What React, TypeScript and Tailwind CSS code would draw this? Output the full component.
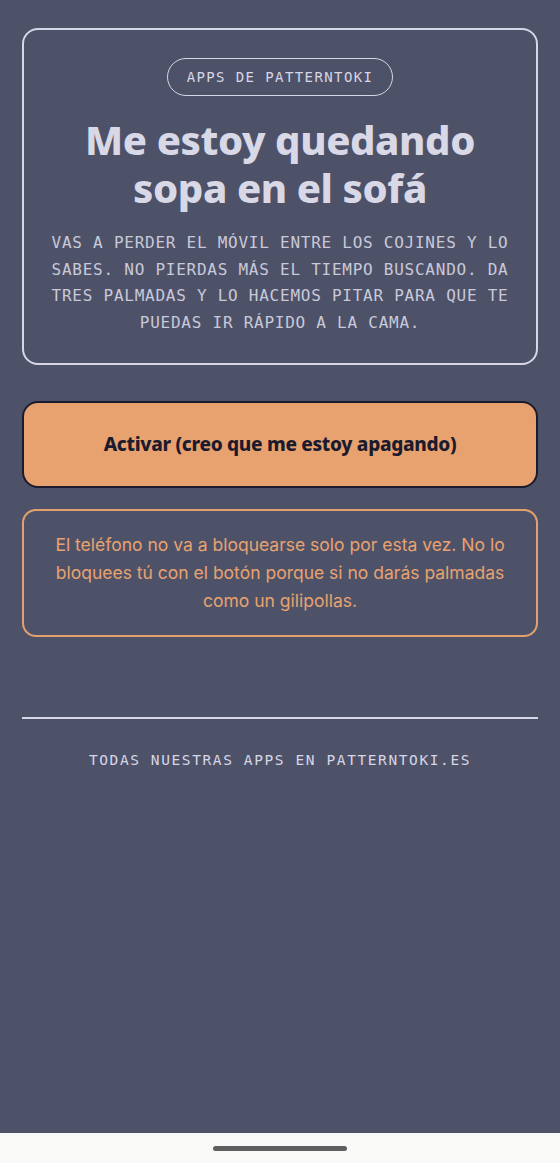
export default function App() {
  const mono = { fontFamily: '"DejaVu Sans Mono", "Liberation Mono", monospace' }
  const display = { fontFamily: '"Noto Sans", Lato, sans-serif' }
  const body = { fontFamily: 'Inter, "Noto Sans", sans-serif' }

  return (
    <div className="flex h-[1163px] w-full flex-col bg-[#4e5269]">
      <main className="flex flex-1 flex-col px-[22px] pt-[28px]">
        <section className="flex flex-col items-center rounded-[16px] border-2 border-[#d7d6e6] px-[26px] pb-[27px] pt-[28px]">
          <span
            style={mono}
            className="flex h-[38px] items-center rounded-full border border-[#d7d6e6] px-[19px] text-[14px] tracking-[1.4px] text-[#d7d6e6]"
          >
            APPS DE PATTERNTOKI
          </span>
          <h1
            style={display}
            className="mt-[20px] text-center text-[40px] font-extrabold leading-[48px] tracking-[-0.4px] text-[#d9d8e6]"
          >
            Me estoy quedando
            <br />
            sopa en el sofá
          </h1>
          <p
            style={mono}
            className="mt-[18px] text-center text-[16px] leading-[26.5px] tracking-[0.75px] text-[#c9c9d9]"
          >
            VAS A PERDER EL MÓVIL ENTRE LOS COJINES Y LO SABES. NO PIERDAS MÁS EL TIEMPO BUSCANDO. DA TRES PALMADAS Y LO HACEMOS PITAR PARA QUE TE PUEDAS IR RÁPIDO A LA CAMA.
          </p>
        </section>

        <button
          style={display}
          className="mt-[36px] flex h-[87px] items-center justify-center rounded-[16px] border-2 border-[#1c1b2e] bg-[#e8a26f] text-[19px] font-extrabold tracking-[-0.3px] text-[#1c1b2e]"
        >
          Activar (creo que me estoy apagando)
        </button>

        <div className="mt-[21px] rounded-[14px] border-2 border-[#e3a06e] px-[30px] py-[20px]">
          <p style={body} className="text-center text-[17.5px] leading-[28px] text-[#e8a26f]">
            El teléfono no va a bloquearse solo por esta vez. No lo bloquees tú con el botón porque si no darás palmadas como un gilipollas.
          </p>
        </div>

        <div className="mt-[80px] h-[1.5px] bg-[#d7d6e6]" />

        <p
          style={mono}
          className="mt-[31px] text-center text-[14.5px] leading-[20px] tracking-[1.6px] text-[#d7d6e6]"
        >
          TODAS NUESTRAS APPS EN PATTERNTOKI.ES
        </p>
      </main>

      <div className="flex h-[30px] items-center justify-center bg-[#f9f9f7]">
        <div className="h-[5px] w-[134px] rounded-full bg-[#5f5f5f]" />
      </div>
    </div>
  )
}
